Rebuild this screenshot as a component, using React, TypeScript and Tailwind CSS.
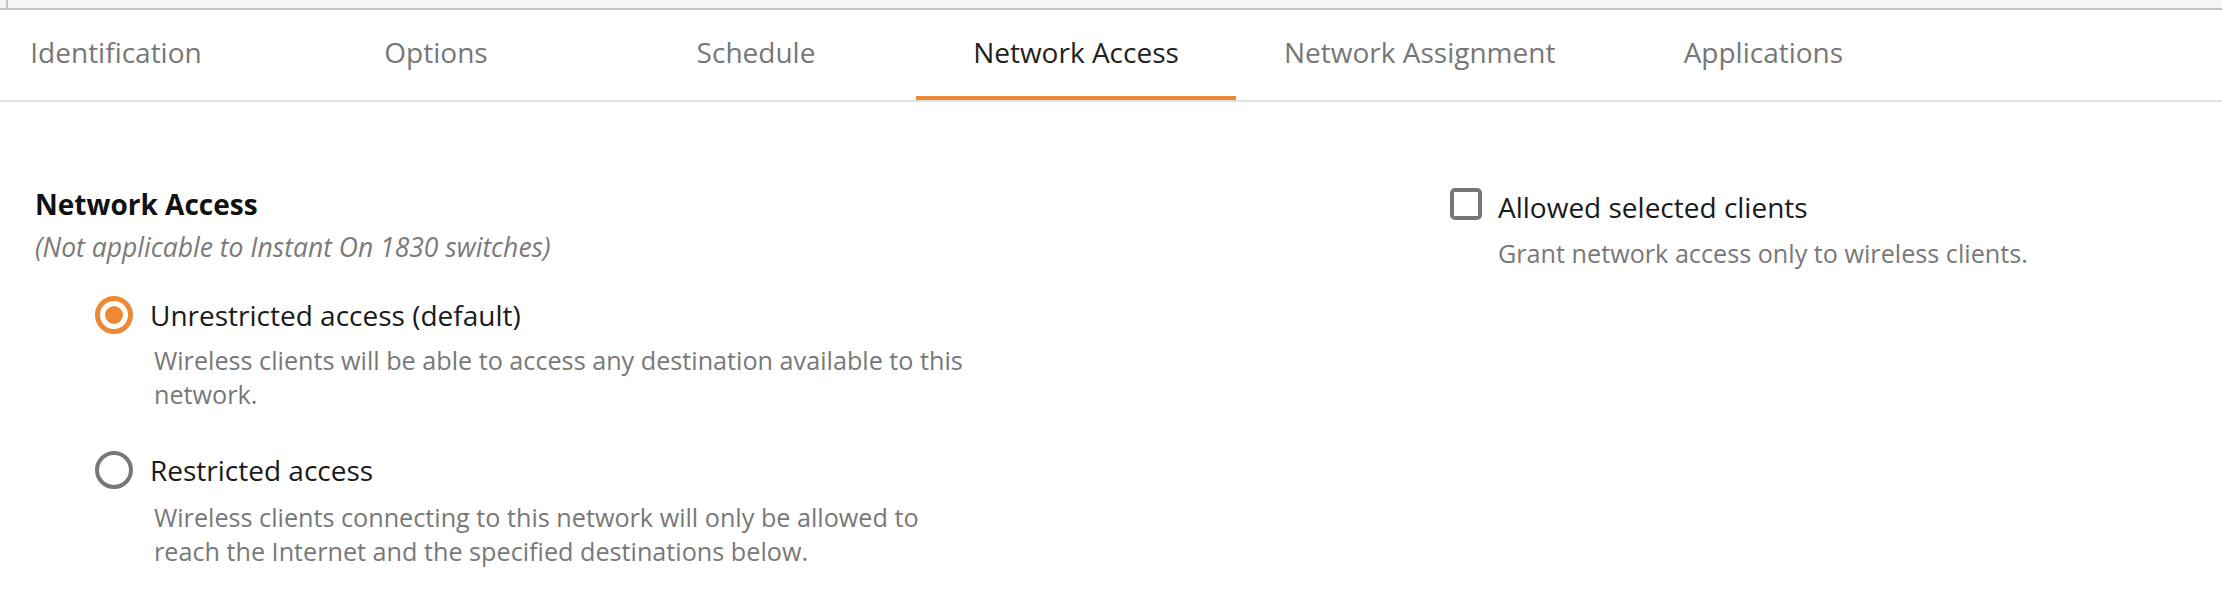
import React from "react";

const tabs = [
  { label: "Identification", first: true },
  { label: "Options" },
  { label: "Schedule" },
  { label: "Network Access", active: true },
  { label: "Network Assignment" },
  { label: "Applications" },
];

function Radio({ checked }: { checked?: boolean }) {
  return checked ? (
    <span className="flex h-[38px] w-[38px] shrink-0 items-center justify-center rounded-full border-[5px] border-[#ee8833] bg-white">
      <span className="h-[18px] w-[18px] rounded-full bg-[#ee8833]" />
    </span>
  ) : (
    <span className="h-[38px] w-[38px] shrink-0 rounded-full border-[4px] border-[#777777] bg-white" />
  );
}

export default function App() {
  return (
    <div className="h-[604px] w-full overflow-hidden bg-white font-['Open_Sans',sans-serif]">
      <div className="flex h-[10px] border-b-2 border-[#c2c5c5] bg-[#f4f6f5]">
        <div className="ml-[6px] h-full w-[2px] bg-[#c2c5c5]" />
      </div>
      <div className="flex h-[92px] border-b-2 border-[#e2e2e2]">
        {tabs.map((t) => (
          <div
            key={t.label}
            className={`flex h-full min-w-[320px] items-center justify-center whitespace-nowrap border-b-4 px-12 pb-[2px] text-[28px] ${
              t.first ? "-ml-[44px]" : ""
            } ${t.active ? "border-[#ee8833] text-[#222222]" : "border-transparent text-[#777777]"}`}
          >
            {t.label}
          </div>
        ))}
      </div>
      <div className="flex">
        <div className="w-[1450px] shrink-0 pl-[35px] pt-[83px]">
          <div className="text-[28px] leading-[38px] font-bold text-[#111111]">Network Access</div>
          <div className="mt-[7px] text-[26.5px] leading-[34px] italic text-[#7a7a7a]">
            (Not applicable to Instant On 1830 switches)
          </div>
          <div className="ml-[60px]">
            <div className="mt-[31px] flex items-center gap-[17px]">
              <Radio checked />
              <span className="text-[28px] leading-[40px] text-[#1a1a1a]">
                Unrestricted access (default)
              </span>
            </div>
            <div className="ml-[59px] mt-[8px] w-[820px] text-[25.2px] leading-[34px] text-[#787878]">
              Wireless clients will be able to access any destination available to this network.
            </div>
            <div className="mt-[39px] flex items-center gap-[17px]">
              <Radio />
              <span className="text-[28px] leading-[40px] text-[#1a1a1a]">
                Restricted access
              </span>
            </div>
            <div className="ml-[59px] mt-[10px] w-[820px] text-[25.2px] leading-[34px] text-[#787878]">
              Wireless clients connecting to this network will only be allowed to reach the Internet and the specified destinations below.
            </div>
          </div>
        </div>
        <div className="pt-[85px]">
          <div className="flex items-start gap-[16px]">
            <span className="mt-[1px] h-[32px] w-[32px] shrink-0 rounded-[5px] border-[4px] border-[#777777] bg-white" />
            <span className="text-[28px] leading-[40px] text-[#1a1a1a]">
              Allowed selected clients
            </span>
          </div>
          <div className="mt-[9px] pl-[48px] text-[25.2px] leading-[34px] text-[#787878]">
            Grant network access only to wireless clients.
          </div>
        </div>
      </div>
    </div>
  );
}
